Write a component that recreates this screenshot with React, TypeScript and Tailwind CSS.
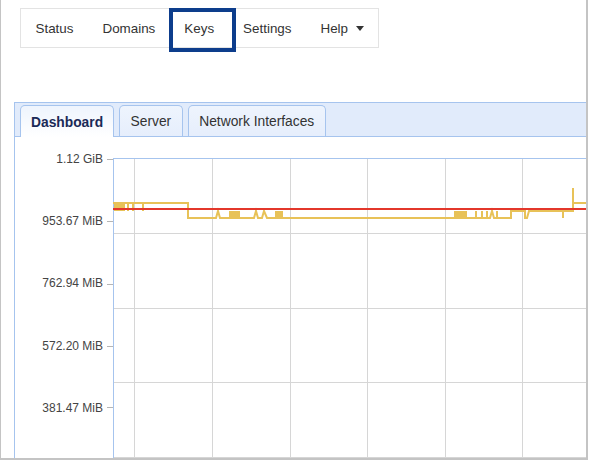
const navItems = ['Status', 'Domains', 'Keys', 'Settings', 'Help']
const yLabels = ['1.12 GiB', '953.67 MiB', '762.94 MiB', '572.20 MiB', '381.47 MiB']
const gridX = [134, 212, 290, 367, 445, 522, 600]
const gridY = [233, 308, 382, 457]
const ticks = [159, 221, 284, 346, 407]

function Chart() {
  return (
    <svg width={500} height={302} className="block shrink-0">
      <g transform="translate(-107 -158)">
        {gridX.map((x) => (
          <line key={x} x1={x + 0.5} x2={x + 0.5} y1={158} y2={460} stroke="#d6d6d6" />
        ))}
        {gridY.map((y) => (
          <line key={y} x1={113} x2={620} y1={y + 0.5} y2={y + 0.5} stroke="#d6d6d6" />
        ))}
        {ticks.map((y) => (
          <line key={y} x1={107} x2={113} y1={y + 0.5} y2={y + 0.5} stroke="#b5b5b5" />
        ))}
        <line x1={113} x2={620} y1={158.5} y2={158.5} stroke="#a6c4ee" />
        <line x1={113.5} x2={113.5} y1={158} y2={460} stroke="#a6c4ee" />

        {/* memory usage */}
        <g fill="#e8c258">
          <rect x={114} y={203} width={11} height={8} />
          <rect x={229} y={211} width={11} height={7} />
          <rect x={275} y={211} width={8} height={7} />
          <rect x={454} y={211} width={13} height={7} />
        </g>
        <path
          d="M113 203 H188 V218 H216 L218 211 L220 218 H254 L256 211 L258 218 H262 L264 211 L267 218 H476 V211 V218 H482 V211 V218 H487 V211 V218 H490 L492 211 L494 218 H497 V211 V218 H511 V211 H525 V218 H527 L529 211 H563 V218 V211 H573 V188 V203 H620 M128 203 V211 M133 203 V211 M143 203 V211 M120 203 V211"
          fill="none"
          stroke="#e8c258"
          strokeWidth={2}
        />
        <line x1={113} x2={620} y1={209} y2={209} stroke="#e3372b" strokeWidth={2} />
      </g>
    </svg>
  )
}

export default function App() {
  return (
    <div className="w-[589px] h-[461px] bg-white font-['Liberation_Sans',Arial,sans-serif] text-[#333]">
      <div className="w-[588px] h-[460px] overflow-hidden border-l border-r-2 border-b-2 border-[#c4c4c4]">
        {/* top nav */}
        <ul className="ml-[19px] mt-[8px] w-[359px] h-[40px] flex border border-[#e3e3e3] text-[13.4px]">
          {navItems.map((item) => (
            <li key={item} className="relative flex items-center px-[14.5px] pt-[1px] leading-[20px]">
              {item}
              {item === 'Help' && (
                <span className="ml-[8px] border-x-[4px] border-x-transparent border-t-[5px] border-t-[#333]" />
              )}
              {item === 'Keys' && (
                <span className="absolute left-[-1px] right-[-7px] top-[-1px] bottom-[-5px] border-4 border-[#0d3d8c]" />
              )}
            </li>
          ))}
        </ul>

        {/* tab panel */}
        <div className="ml-[13px] mt-[54px] w-[620px] h-[400px] border border-[#a6c4ee] bg-white">
          <div className="flex items-end gap-[5px] h-[34px] pl-[5px] bg-[#e1ebfb] border-b border-[#a6c4ee] text-[13.8px]">
            <div className="-mb-px h-[32px] flex items-center px-[10px] pt-[3px] rounded-t-[5px] border border-b-0 border-[#a6c4ee] bg-gradient-to-b from-[#eef4fd] to-white font-bold text-[#1b2a57]">
              Dashboard
            </div>
            <div className="h-[31px] flex items-center px-[10.5px] pt-[2px] rounded-t-[5px] border border-b-0 border-[#a6c4ee] bg-gradient-to-b from-[#eef4fd] to-[#e6eefc]">
              Server
            </div>
            <div className="h-[31px] flex items-center px-[10.5px] pt-[2px] rounded-t-[5px] border border-b-0 border-[#a6c4ee] bg-gradient-to-b from-[#eef4fd] to-[#e6eefc]">
              Network Interfaces
            </div>
          </div>

          <div className="flex pt-[21px]">
            <div className="w-[92px] shrink-0 pr-[4px] -mt-[6px] text-right text-[12px] text-[#444]">
              {yLabels.map((l) => (
                <div key={l} className="h-[62.2px] leading-[14px]">
                  {l}
                </div>
              ))}
            </div>
            <Chart />
          </div>
        </div>
      </div>
    </div>
  )
}
